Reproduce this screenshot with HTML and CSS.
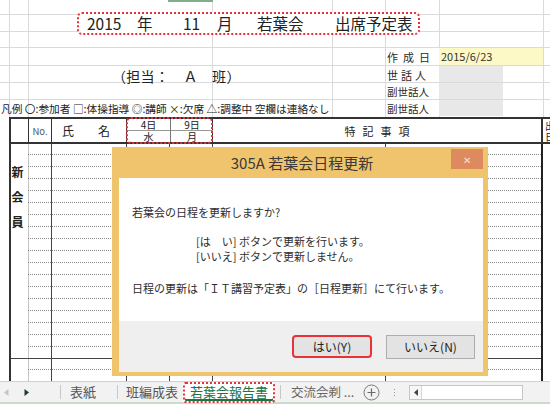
FILE: index.html
```html
<!DOCTYPE html>
<html lang="ja">
<head>
<meta charset="utf-8">
<title>若葉会 出席予定表</title>
<link rel="stylesheet" href="styles.css">
</head>
<body>
<div class="sheet">
  <div class="top">
    <div class="title">
      <span>2015</span><span>年</span><span>11</span><span>月</span><span>若葉会</span><span>出席予定表</span>
    </div>
    <div class="tanto">（担当：　Ａ　班）</div>
    <div class="label r4 sp5">作成日</div>
    <div class="label r5 sp3">世話人</div>
    <div class="label r6">副世話人</div>
    <div class="label r7">副世話人</div>
    <div class="val-date r4">2015/6/23</div>
    <div class="val-grey r5"></div>
    <div class="val-grey r6"></div>
    <div class="val-grey r7"></div>
    <div class="legend">凡例 〇:参加者 □:体操指導 ◎:講師 ×:欠席 △:調整中 空欄は連絡なし</div>
  </div>

  <div class="table">
    <div class="thead">
      <div class="h"></div>
      <div class="h h-no">No.</div>
      <div class="h h-name">氏　　名</div>
      <div class="h-dates">
        <div class="date"><span class="d-top">4日</span><span class="d-bot">水</span></div>
        <div class="date"><span class="d-top">9日</span><span class="d-bot">月</span></div>
      </div>
      <div class="h h-note">特記事項</div>
      <div class="h h-next"><span>出</span><span>日</span></div>
    </div>
    <div class="tbody">
      <div class="group">
        <div class="grp-label"><span>新</span><span>会</span><span>員</span></div>
        <div class="rows">
          <div class="row"></div><div class="row"></div><div class="row"></div>
          <div class="row"></div><div class="row"></div><div class="row"></div>
          <div class="row"></div><div class="row"></div><div class="row"></div>
          <div class="row"></div><div class="row"></div><div class="row"></div>
          <div class="row"></div><div class="row"></div><div class="row"></div>
          <div class="row"></div><div class="row"></div><div class="row"></div>
        </div>
      </div>
      <div class="group">
        <div class="grp-label"></div>
        <div class="rows">
          <div class="row"></div><div class="row"></div><div class="row"></div>
        </div>
      </div>
    </div>
  </div>
</div>

<div class="tabbar">
  <span class="nav prev"><svg width="5" height="7" viewBox="0 0 5 7"><path d="M4.5 0 L0 3.5 L4.5 7 Z" fill="#c4c4c4"/></svg></span>
  <span class="nav next"><svg width="5" height="7" viewBox="0 0 5 7"><path d="M0.5 0 L5 3.5 L0.5 7 Z" fill="#1f3d2a"/></svg></span>
  <span class="sep s1"></span>
  <span class="tab t1">表紙</span>
  <span class="sep s2"></span>
  <span class="tab t2">班編成表</span>
  <span class="tab active">若葉会報告書</span>
  <span class="sep s3"></span>
  <span class="tab t3">交流会剃 ...</span>
  <span class="add"><svg width="17" height="17" viewBox="0 0 17 17"><circle cx="8.5" cy="8.5" r="7.5" fill="none" stroke="#7a7a7a" stroke-width="1"/><path d="M8.5 4.5 V12.5 M4.5 8.5 H12.5" stroke="#6a6a6a" stroke-width="1.2"/></svg></span>
  <span class="dots"><i></i><i></i><i></i></span>
  <div class="hscroll">
    <span class="hs-btn"><svg width="4" height="7" viewBox="0 0 4 7"><path d="M4 0 L0 3.5 L4 7 Z" fill="#444"/></svg></span>
    <span class="hs-track"></span>
  </div>
</div>

<div class="dialog">
  <div class="dlg-title">
    <span class="dlg-caption">305A 若葉会日程更新</span>
    <span class="dlg-close">✕</span>
  </div>
  <div class="dlg-body">
    <p class="q">若葉会の日程を更新しますか?</p>
    <p class="opt first">[は　い] ボタンで更新を行います。</p>
    <p class="opt">[いいえ] ボタンで更新しません。</p>
    <p class="note">日程の更新は「ＩＴ講習予定表」の［日程更新］にて行います。</p>
  </div>
  <div class="dlg-foot">
    <button class="btn yes">はい(Y)</button>
    <button class="btn no">いいえ(N)</button>
  </div>
</div>
</body>
</html>
```

FILE: styles.css
```css
* { box-sizing: border-box; margin: 0; padding: 0; }

html, body {
  width: 550px;
  height: 404px;
  overflow: hidden;
  background: #fff;
}

body {
  position: relative;
  font-family: "Noto Sans CJK JP", "Noto Sans", sans-serif;
  color: #222;
  text-spacing-trim: space-all;
}

.sheet {
  height: 381px;
  overflow: hidden;
}

/* ---------- upper area of the sheet ---------- */
.top {
  --g: linear-gradient(#dadada, #dadada);
  display: grid;
  grid-template-columns: 9px 19px 23px 75px 43px 43px 120px 53px 54px 104px 7px;
  grid-template-rows: 15px 17px 16px 18px 17px 17px 17px;
  background-image:
    linear-gradient(#7fae8e, #7fae8e),
    var(--g), var(--g), var(--g), var(--g), var(--g), var(--g), var(--g),
    var(--g), var(--g), var(--g), var(--g), var(--g), var(--g);
  background-repeat: no-repeat;
  background-size:
    45px 2px,
    1px 100%, 1px 100%, 1px 100%, 1px 100%, 1px 100%, 1px 100%, 1px 100%,
    100% 1px, 100% 1px, 100% 1px, 100% 1px, 100% 1px, 100% 1px;
  background-position:
    168px 0,
    9px 0, 28px 0, 212px 0, 332px 0, 385px 0, 439px 0, 543px 0,
    0 14px, 0 31px, 0 47px, 0 65px, 0 82px, 0 99px;
}

.title {
  grid-row: 1 / 4;
  grid-column: 1 / -1;
  align-self: start;
  justify-self: start;
  margin: 12px 0 0 77px;
  width: 343px;
  height: 23px;
  border: 2px dotted #e8323a;
  border-radius: 5px;
  background: #fff;
  padding-left: 8px;
  display: grid;
  grid-template-columns: 50px 46px 34px 40px 78px auto;
  align-items: center;
  font-size: 15.5px;
  line-height: 1;
  color: #222;
}

.tanto {
  grid-row: 5;
  grid-column: 1 / 9;
  align-self: end;
  padding-left: 112px;
  font-size: 14px;
  letter-spacing: 0.3px;
  line-height: 14px;
  color: #222;
}

.label {
  grid-column: 9;
  align-self: center;
  padding-left: 2px;
  font-size: 10.5px;
  line-height: 14px;
  color: #2a2a2a;
  white-space: nowrap;
}
.sp5 { letter-spacing: 5px; font-size: 11px; }
.sp3 { letter-spacing: 3px; font-size: 11px; }

.r4 { grid-row: 4; }
.r5 { grid-row: 5; }
.r6 { grid-row: 6; }
.r7 { grid-row: 7; }

.val-date {
  grid-column: 10;
  height: 17px;
  background: #fdf9c6;
  font-size: 11px;
  line-height: 17px;
  padding-left: 2px;
  color: #333;
}

.val-grey {
  grid-column: 10;
  width: 64px;
  height: 16px;
  background: #e8e8e8;
}

.legend {
  grid-row: 7;
  grid-column: 1 / 9;
  align-self: center;
  font-size: 10.7px;
  line-height: 14px;
  padding-left: 1px;
  white-space: nowrap;
  color: #222;
}

/* ---------- table ---------- */
.table {
  margin-left: 9px;
  border-top: 2px solid #333;
  border-left: 2px solid #333;
}

.thead {
  display: grid;
  grid-template-columns: 17px 23px 75px 86px 329px 1fr;
  height: 25px;
  border-bottom: 2px solid #333;
}

.h {
  display: flex;
  align-items: center;
  justify-content: center;
  font-size: 11px;
  color: #222;
}
.h + .h, .h-dates + .h { border-left: 1px solid #333; }

.h-no {
  font-size: 9.5px;
  color: #555;
}
.h-name {
  font-size: 12px;
  padding-right: 6px;
}

.h-dates {
  position: relative;
  display: grid;
  grid-template-columns: 43px 43px;
  border-left: 1px solid #333;
}
.h-dates::after {
  content: "";
  position: absolute;
  inset: -2px -1px -2px -1px;
  border: 2px dotted #e8323a;
  border-radius: 5px;
}
.date {
  display: flex;
  flex-direction: column;
  font-size: 10px;
  line-height: 11px;
  text-align: center;
  color: #222;
}
.date + .date { border-left: 1px solid #777; }
.d-top { height: 12px; border-bottom: 1px solid #999; }
.d-bot { height: 11px; }

.h-note {
  letter-spacing: 7px;
  padding-left: 7px;
  font-size: 11px;
}
.h.h-next {
  border-left-width: 2px;
  flex-direction: column;
  align-items: flex-start;
  justify-content: flex-start;
  padding: 1px 0 0 2px;
  font-size: 10px;
  line-height: 11px;
}

.tbody {
  --d: linear-gradient(#444, #444);
  background-image:
    linear-gradient(#c4c4c4, #c4c4c4),
    var(--d), var(--d), var(--d), var(--d), var(--d),
    linear-gradient(#222, #222);
  background-repeat: no-repeat;
  background-size: 1px 100%, 1px 100%, 1px 100%, 1px 100%, 1px 100%, 1px 100%, 2px 100%;
  background-position: 17px 0, 40px 0, 115px 0, 158px 0, 201px 0, 374px 0, 530px 0;
}

.group {
  display: grid;
  grid-template-columns: 17px 513px;
  width: 530px;
  border-bottom: 1px solid #444;
}

.grp-label {
  display: flex;
  flex-direction: column;
  padding-top: 15px;
  padding-right: 4px;
  font-size: 12px;
  font-weight: bold;
  line-height: 25px;
  text-align: center;
  color: #222;
}

.row {
  height: 12px;
  border-bottom: 1px dotted #8a8a8a;
}
.row:first-child { height: 11px; }
.row:last-child { height: 11px; border-bottom: none; }

/* ---------- sheet tabs ---------- */
.tabbar {
  height: 23px;
  display: flex;
  align-items: center;
  background: #f2f2f2;
  border-top: 1px solid #d0d0d0;
  border-bottom: 2px solid #c9dccd;
  font-size: 13px;
  color: #555;
}

.nav {
  display: flex;
  justify-content: center;
  width: 12px;
}
.next { margin-left: 8px; }

.sep {
  width: 1px;
  height: 14px;
  background: #c8c8c8;
}
.s1 { margin-left: 28px; }
.s2 { margin-left: 10px; }
.s3 { margin-left: 5px; }

.tab { white-space: nowrap; line-height: 16px; }
.t1 { margin-left: 9px; width: 37px; }
.t2 { margin-left: 8px; width: 57px; }
.t3 { margin-left: 10px; width: 72px; font-size: 12.5px; color: #666; }

.tab.active {
  width: 92px;
  height: 21px;
  align-self: flex-start;
  margin-left: 0;
  border: 2px dotted #e8323a;
  border-radius: 3px;
  background: #fff;
  color: #217346;
  text-align: center;
  line-height: 16px;
  box-shadow: inset 0 -2px 0 #217346;
}

.add {
  display: flex;
  margin-left: 0;
}

.dots {
  display: flex;
  flex-direction: column;
  gap: 2px;
  margin-left: 14px;
}
.dots i {
  display: block;
  width: 1px;
  height: 1px;
  background: #999;
}

.hscroll {
  display: flex;
  margin-left: 14px;
  width: 114px;
  height: 15px;
  border: 1px solid #c6c6c6;
  background: #fff;
}
.hs-btn {
  display: flex;
  align-items: center;
  justify-content: center;
  width: 12px;
  border-right: 1px solid #d6d6d6;
  background: #f7f7f7;
}
.hs-track { flex: 1; }

/* ---------- dialog ---------- */
.dialog {
  position: absolute;
  left: 112px;
  top: 147px;
  width: 376px;
  height: 229px;
  display: flex;
  flex-direction: column;
  background: #efc46c;
  padding: 0 5px 4px 7px;
}

.dlg-title {
  position: relative;
  height: 31px;
  display: flex;
  align-items: center;
  justify-content: center;
}
.dlg-caption {
  font-size: 15px;
  color: #3a3a3a;
  padding-left: 2px;
}
.dlg-close {
  position: absolute;
  right: 0;
  top: 2px;
  width: 32px;
  height: 20px;
  display: flex;
  align-items: center;
  justify-content: center;
  background: #dc8a5e;
  color: #f9e1d3;
  font-size: 10px;
}

.dlg-body {
  height: 143px;
  background: #fff;
  padding: 27px 0 0 13px;
  font-size: 11px;
  line-height: 15px;
  color: #2e2e2e;
}
.opt { padding-left: 64px; }
.opt.first { margin-top: 14px; }
.note { margin-top: 17px; }

.dlg-foot {
  flex: 1;
  background: #efefef;
  position: relative;
  display: flex;
  align-items: center;
  padding-left: 173px;
}

.btn {
  font-family: inherit;
  font-size: 12px;
  color: #222;
  background: #e3e3e3;
  border: 1px solid #adadad;
  height: 23px;
}
.btn.yes {
  width: 80px;
  border: 2px solid #e8323a;
  border-radius: 4px;
}
.btn.no {
  width: 89px;
  height: 24px;
  margin-left: 14px;
}
```
